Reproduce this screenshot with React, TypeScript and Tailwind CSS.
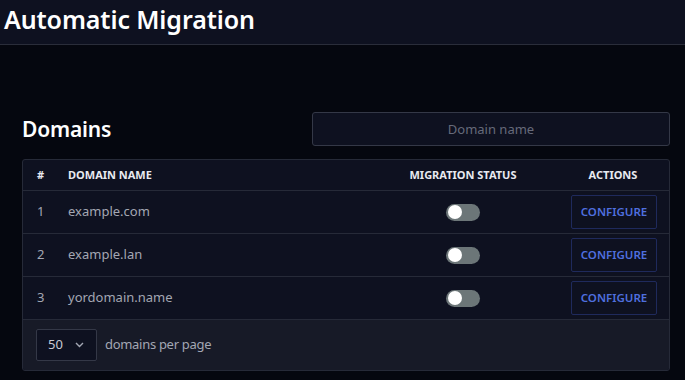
import React from 'react';

const domains = ['example.com', 'example.lan', 'yordomain.name'];

const Toggle: React.FC<{ on?: boolean }> = ({ on }) => (
  <button
    type="button"
    className={`w-[34px] h-[17px] rounded-full flex items-center px-[2px] ${on ? 'bg-[#4f6fdf] justify-end' : 'bg-[#6c7678] justify-start'}`}
  >
    <span className="w-[14px] h-[14px] rounded-full bg-white block" />
  </button>
);

export default function App() {
  return (
    <div
      className="w-[685px] h-[380px] overflow-hidden bg-[#05070f] text-white"
      style={{ fontFamily: '"Noto Sans", "Open Sans", sans-serif' }}
    >
      {/* Header */}
      <div className="h-[45px] bg-[#0e1120] border-b border-[#2a2d3a] flex items-center px-[4px]">
        <h1 className="text-[25px] font-semibold tracking-[-0.1px] leading-none -mt-[6px]">Automatic Migration</h1>
      </div>

      <div className="px-[22px] pt-[67px]">
        <div className="flex items-center justify-between mb-[13px]">
          <h2 className="text-[21px] font-semibold leading-none tracking-[-0.2px]">Domains</h2>
          <input
            placeholder="Domain name"
            className="w-[358px] h-[34px] -mr-[7px] rounded-[3px] border border-[#343847] bg-[#0e1120] text-center text-[13px] text-[#c8cad3] placeholder-[#666a7a] outline-none"
          />
        </div>

        <div className="w-[648px] rounded-[3px] border border-[#262a38] bg-[#0e1120] overflow-hidden">
          <div className="grid grid-cols-[45px_1fr_214px_99px] h-[31px] items-center border-b border-[#262a38] text-[11px] font-bold text-[#e8eaf0] uppercase">
            <div className="pl-[14px]">#</div>
            <div>Domain Name</div>
            <div className="text-center">Migration Status</div>
            <div className="text-center pr-[13px]">Actions</div>
          </div>

          {domains.map((d, i) => (
            <div
              key={d}
              className="grid grid-cols-[45px_1fr_214px_99px] h-[43px] items-center border-b border-[#262a38] text-[13px] text-[#a3a7b3]"
            >
              <div className="pl-[14px]">{i + 1}</div>
              <div>{d}</div>
              <div className="flex justify-center">
                <Toggle />
              </div>
              <div className="flex justify-end pr-[12px]">
                <button className="w-[86px] h-[34px] border border-[#1f2a5c] rounded-[2px] text-[11.5px] font-semibold text-[#4f6fdf] uppercase">
                  Configure
                </button>
              </div>
            </div>
          ))}

          <div className="h-[50px] bg-[#171a27] flex items-center px-[13px] gap-[8px]">
            <div className="w-[61px] h-[32px] bg-[#0e1120] border border-[#343847] rounded-[2px] flex items-center justify-between pl-[11px] pr-[12px] text-[13px] text-[#c8cad3]">
              <span>50</span>
              <svg width="9" height="6" viewBox="0 0 9 6" fill="none">
                <path d="M1 1l3.5 3.5L8 1" stroke="#a3a7b3" strokeWidth="1.4" />
              </svg>
            </div>
            <span className="text-[13px] tracking-[-0.3px] text-[#a3a7b3]">domains per page</span>
          </div>
        </div>
      </div>
    </div>
  );
}
